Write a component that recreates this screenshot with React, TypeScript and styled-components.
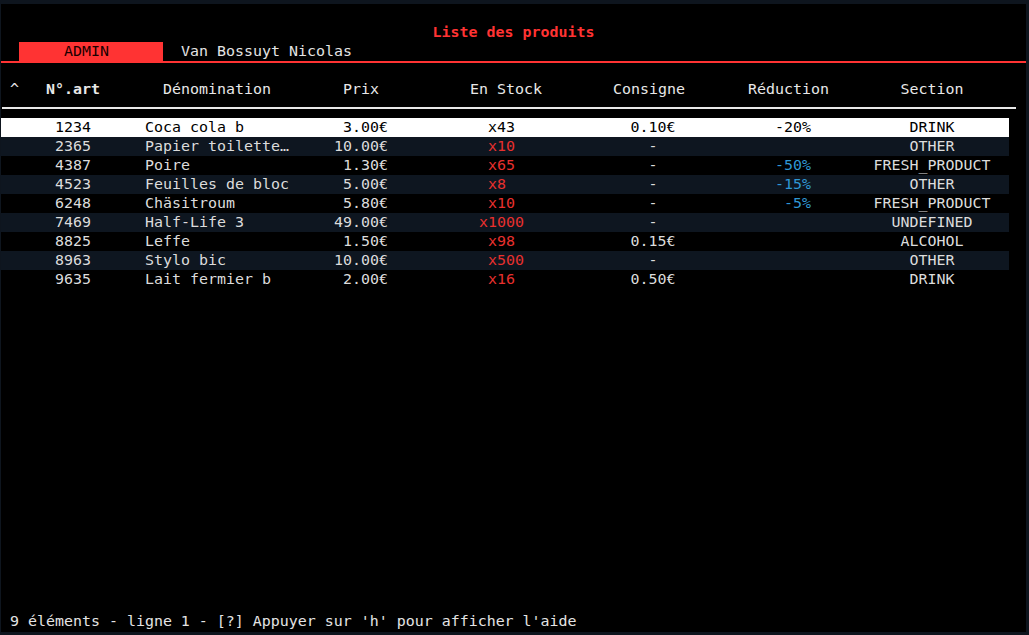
import React from "react";
import styled, { createGlobalStyle } from "styled-components";

const Global = createGlobalStyle`
  html, body { margin: 0; padding: 0; background: #0e151e; }
  body { font-family: "DejaVu Sans Mono", "Liberation Mono", monospace; }
`;

const RED = "#ff3333";
const FRAME = "#0e151e";

const Frame = styled.div`
  width: 1029px;
  height: 635px;
  box-sizing: border-box;
  border-style: solid;
  border-color: ${FRAME};
  border-width: 4px 3px 3px 1px;
  background: #000;
  display: flex;
  flex-direction: column;
  font-family: "DejaVu Sans Mono", "Liberation Mono", monospace;
  font-size: 14.95px;
  line-height: 19px;
  color: #dcdcdc;
  overflow: hidden;
`;

const Title = styled.div`
  margin-top: 19px;
  height: 19px;
  text-align: center;
  color: ${RED};
  font-weight: bold;
`;

const TabBar = styled.div`
  display: flex;
  height: 19px;
  padding-left: 18px;
  border-bottom: 2px solid ${RED};
`;

const Tab = styled.div<{ $active?: boolean }>`
  box-sizing: border-box;
  width: ${(p) => (p.$active ? "144px" : "auto")};
  padding-right: ${(p) => (p.$active ? "9px" : "0")};
  margin-left: ${(p) => (p.$active ? "0" : "18px")};
  text-align: center;
  background: ${(p) => (p.$active ? RED : "transparent")};
  color: ${(p) => (p.$active ? "#1a0000" : "#e4e4e4")};
`;

const COLS = "36px 72px 36px 144px 45px 54px 82px 72px 71px 72px 63px 81px 37px 132px 11px";

const HeaderRow = styled.div`
  display: grid;
  grid-template-columns: ${COLS};
  height: 19px;
  margin-top: 17px;
  color: #e8e8e8;
`;

const Underline = styled.div`
  margin: 8px 0 9px 1px;
  width: 1014px;
  height: 2px;
  background: #e8e8e8;
`;

const Row = styled.div<{ $selected?: boolean; $alt?: boolean }>`
  display: grid;
  grid-template-columns: ${COLS};
  width: 1008px;
  height: 19px;
  background: ${(p) => (p.$selected ? "#ffffff" : p.$alt ? "#0e1620" : "transparent")};
  color: ${(p) => (p.$selected ? "#000" : "#dcdcdc")};
`;

type Align = "left" | "center" | "right";

const Cell = styled.div<{ $col: number; $align?: Align; $bold?: boolean; $tone?: "red" | "blue"; $shiftL?: number; $shiftR?: number; $sel?: boolean }>`
  grid-column: ${(p) => p.$col};
  text-align: ${(p) => p.$align || "left"};
  font-weight: ${(p) => (p.$bold ? "bold" : "normal")};
  white-space: pre;
  overflow: visible;
  padding-left: ${(p) => p.$shiftL || 0}px;
  padding-right: ${(p) => p.$shiftR || 0}px;
  color: ${(p) =>
    p.$sel ? "#000" : p.$tone === "red" ? "#e8302e" : p.$tone === "blue" ? "#2f97d4" : "inherit"};
`;

const Footer = styled.div`
  margin-top: auto;
  margin-bottom: 1px;
  height: 19px;
  padding-left: 9px;
  color: #e4e4e4;
`;

type Product = {
  id: string;
  name: string;
  price: string;
  stock: string;
  deposit: string;
  reduction: string;
  section: string;
};

const products: Product[] = [
  { id: "1234", name: "Coca cola b", price: "3.00€", stock: "x43", deposit: "0.10€", reduction: "-20%", section: "DRINK" },
  { id: "2365", name: "Papier toilette…", price: "10.00€", stock: "x10", deposit: "-", reduction: "", section: "OTHER" },
  { id: "4387", name: "Poire", price: "1.30€", stock: "x65", deposit: "-", reduction: "-50%", section: "FRESH_PRODUCT" },
  { id: "4523", name: "Feuilles de bloc", price: "5.00€", stock: "x8", deposit: "-", reduction: "-15%", section: "OTHER" },
  { id: "6248", name: "Chäsitroum", price: "5.80€", stock: "x10", deposit: "-", reduction: "-5%", section: "FRESH_PRODUCT" },
  { id: "7469", name: "Half-Life 3", price: "49.00€", stock: "x1000", deposit: "-", reduction: "", section: "UNDEFINED" },
  { id: "8825", name: "Leffe", price: "1.50€", stock: "x98", deposit: "0.15€", reduction: "", section: "ALCOHOL" },
  { id: "8963", name: "Stylo bic", price: "10.00€", stock: "x500", deposit: "-", reduction: "", section: "OTHER" },
  { id: "9635", name: "Lait fermier b", price: "2.00€", stock: "x16", deposit: "0.50€", reduction: "", section: "DRINK" },
];

export default function App() {
  return (
    <>
      <Global />
      <Frame>
        <Title>Liste des produits</Title>
        <TabBar>
          <Tab $active>ADMIN</Tab>
          <Tab>Van Bossuyt Nicolas</Tab>
        </TabBar>
        <HeaderRow>
          <Cell $col={1} $shiftL={9}>^</Cell>
          <Cell $col={2} $align="center" $bold>N°.art</Cell>
          <Cell $col={4} $align="center">Dénomination</Cell>
          <Cell $col={6} $align="center">Prix</Cell>
          <Cell $col={8} $align="center">En Stock</Cell>
          <Cell $col={10} $align="center">Consigne</Cell>
          <Cell $col={12} $align="center">Réduction</Cell>
          <Cell $col={14} $align="center">Section</Cell>
        </HeaderRow>
        <Underline />
        {products.map((p, i) => {
          const sel = i === 0;
          return (
            <Row key={p.id} $selected={sel} $alt={i % 2 === 1}>
              <Cell $col={2} $align="center">{p.id}</Cell>
              <Cell $col={4}>{p.name}</Cell>
              <Cell $col={6} $align="right">{p.price}</Cell>
              <Cell $col={8} $align="center" $tone="red" $sel={sel} $shiftR={p.stock.length > 4 ? 9 : 0}>
                {p.stock.padEnd(4, " ")}
              </Cell>
              <Cell $col={10} $align="center" $shiftL={8}>{p.deposit}</Cell>
              <Cell $col={12} $align="right" $shiftR={18} $tone="blue" $sel={sel}>{p.reduction}</Cell>
              <Cell $col={14} $align="center">{p.section}</Cell>
            </Row>
          );
        })}
        <Footer>9 éléments - ligne 1 - [?] Appuyer sur 'h' pour afficher l'aide</Footer>
      </Frame>
    </>
  );
}
